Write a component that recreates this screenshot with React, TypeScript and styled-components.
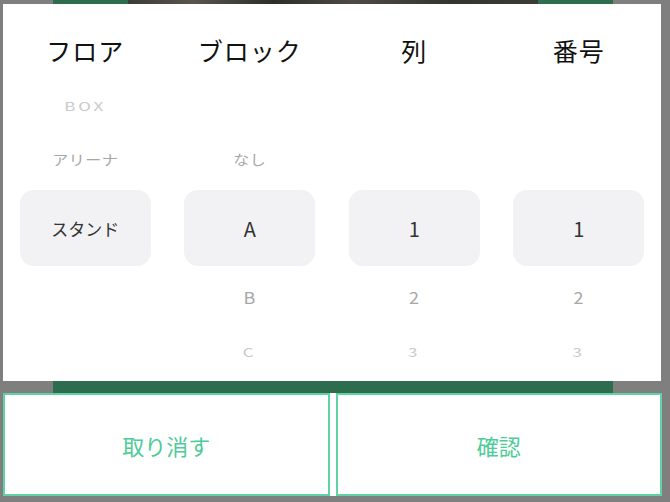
import React from "react";
import styled, { createGlobalStyle } from "styled-components";

interface PickerColumn {
  title: string;
  above: string[];
  selected: string;
  below: string[];
}

const columns: PickerColumn[] = [
  { title: "フロア", above: ["BOX", "アリーナ"], selected: "スタンド", below: [] },
  { title: "ブロック", above: ["", "なし"], selected: "A", below: ["B", "C"] },
  { title: "列", above: ["", ""], selected: "1", below: ["2", "3"] },
  { title: "番号", above: ["", ""], selected: "1", below: ["2", "3"] },
];

// how far a row sits from the selected one decides its look
const tones: Record<number, { color: string; squash: number; size: number }> = {
  1: { color: "#a7a7a7", squash: 0.88, size: 16 },
  2: { color: "#c9c9c9", squash: 0.7, size: 15 },
};

const isLatin = (t: string) => /^[A-Za-z0-9]+$/.test(t);

const App: React.FC = () => {
  return (
    <Screen>
      <GlobalStyle />
      <TopStrip />
      <Panel>
        <Header>
          {columns.map((c) => (
            <Title key={c.title}>{c.title}</Title>
          ))}
        </Header>
        <Wheels>
          {columns.map((c) => (
            <Wheel key={c.title}>
              {c.above.map((t, i) => (
                <Item key={"a" + i} $distance={c.above.length - i} $latin={isLatin(t)}>
                  <span>{t}</span>
                </Item>
              ))}
              <Selected $latin={isLatin(c.selected)}>{c.selected}</Selected>
              {c.below.map((t, i) => (
                <Item key={"b" + i} $distance={i + 1} $latin={isLatin(t)}>
                  <span>{t}</span>
                </Item>
              ))}
            </Wheel>
          ))}
        </Wheels>
      </Panel>
      <BottomBar />
      <ButtonRow>
        <ActionButton type="button">取り消す</ActionButton>
        <ActionButton type="button">確認</ActionButton>
      </ButtonRow>
    </Screen>
  );
};

const GlobalStyle = createGlobalStyle`
  html, body {
    margin: 0;
    padding: 0;
    background: #7f7f7f;
  }
  body {
    font-family: "Noto Sans CJK JP", "Noto Sans", sans-serif;
  }
`;

const Screen = styled.div`
  width: 670px;
  height: 502px;
  display: flex;
  flex-direction: column;
  background: #7f7f7f;
  overflow: hidden;
`;

const TopStrip = styled.div`
  height: 4px;
  margin: 0 57px 0 53px;
  background: linear-gradient(
    90deg,
    #2f6d4f 0 75px,
    #3d3b35 75px,
    #58554d 140px,
    #2e2d29 220px,
    #4d4a43 300px,
    #34332e 400px,
    #3d3b35 485px,
    #2f6d4f 485px
  );
`;

const Panel = styled.div`
  height: 377px;
  margin: 0 9px 0 3px;
  background: #ffffff;
  overflow: hidden;
`;

const Header = styled.div`
  height: 74px;
  box-sizing: border-box;
  padding-top: 18px;
  display: grid;
  grid-template-columns: repeat(4, 1fr);
  align-items: center;
`;

const Title = styled.div`
  text-align: center;
  font-size: 25px;
  letter-spacing: 1px;
  color: #111111;
`;

const Wheels = styled.div`
  display: grid;
  grid-template-columns: repeat(4, 1fr);
`;

const Wheel = styled.div`
  display: flex;
  flex-direction: column;
  align-items: center;
`;

const Item = styled.div<{ $distance: number; $latin: boolean }>`
  height: 54px;
  display: flex;
  align-items: center;
  justify-content: center;
  font-size: ${(p) => tones[p.$distance].size + (p.$latin ? 2 : 0)}px;
  letter-spacing: ${(p) => (p.$distance >= 2 ? "3px" : "0.5px")};
  color: ${(p) => tones[p.$distance].color};

  span {
    display: inline-block;
    transform: scaleY(${(p) => tones[p.$distance].squash});
  }
`;

const Selected = styled.div<{ $latin: boolean }>`
  width: 131px;
  height: 76px;
  margin: 4px 0;
  border-radius: 14px;
  background: #f2f2f4;
  display: flex;
  align-items: center;
  justify-content: center;
  font-size: ${(p) => (p.$latin ? 20 : 17)}px;
  color: #333333;
`;

const BottomBar = styled.div`
  height: 12px;
  margin: 0 57px 0 53px;
  background: #2e6c4e;
`;

const ButtonRow = styled.div`
  height: 103px;
  margin: 0 8px 0 3px;
  display: grid;
  grid-template-columns: 1fr 1fr;
  gap: 6px;
  background: #ffffff;
`;

const ActionButton = styled.button`
  border: 2px solid #5fd3a4;
  border-radius: 0;
  background: #ffffff;
  color: #4ecb98;
  font-family: "Noto Sans CJK JP", "Noto Sans", sans-serif;
  font-size: 22px;
  padding: 0;
  cursor: pointer;
`;

export default App;
